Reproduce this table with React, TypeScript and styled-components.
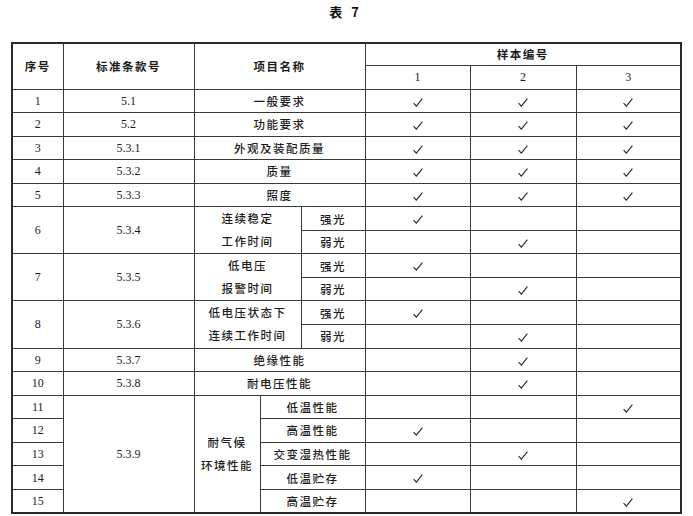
import React from "react";
import styled, { createGlobalStyle } from "styled-components";

const GlobalStyle = createGlobalStyle`
  html, body {
    margin: 0;
    padding: 0;
    background: #ffffff;
  }
  body {
    font-family: "Liberation Serif", "Noto Sans CJK SC", serif;
    color: #1c1c1c;
  }
`;

const Page = styled.div`
  width: 693px;
  height: 516px;
  overflow: hidden;
  padding: 3px 0 0 11px;
  box-sizing: border-box;
`;

const Title = styled.div`
  width: 669px;
  text-align: center;
  font-family: "Noto Sans CJK SC", sans-serif;
  font-weight: 700;
  font-size: 13px;
  line-height: 18px;
  letter-spacing: 3px;
  margin-bottom: 21px;
  color: #111;
`;

const Table = styled.table`
  width: 669px;
  table-layout: fixed;
  border-collapse: collapse;
  border: 2px solid #2a2a2a;
`;

const Cell = styled.td<{ $head?: boolean; $cjk?: boolean; $tall?: boolean }>`
  border: 1px solid #3a3a3a;
  padding: 0;
  text-align: center;
  vertical-align: middle;
  font-size: ${(p) => (p.$cjk ? "11.5px" : "12px")};
  font-family: ${(p) =>
    p.$cjk
      ? `"Noto Sans CJK SC", sans-serif`
      : `"Liberation Serif", "Noto Sans CJK SC", serif`};
  font-weight: ${(p) => (p.$head ? 600 : 500)};
  letter-spacing: ${(p) => (p.$cjk ? 1.5 : 0)}px;
  line-height: ${(p) => (p.$tall ? "23px" : "14px")};
  white-space: nowrap;
  overflow: hidden;
`;

const Row = styled.tr<{ $h: number }>`
  height: ${(p) => p.$h}px;
`;

const CheckMark = styled.svg`
  display: inline-block;
  vertical-align: middle;
  width: 10px;
  height: 9px;
`;

const Check = () => (
  <CheckMark viewBox="0 0 10 9">
    <path d="M0.6 5.2 L3.3 8.2 L9.4 0.6" fill="none" stroke="#2a2a2a" strokeWidth="1.1" />
  </CheckMark>
);

const widths = [51, 131, 66, 41, 64, 105, 106, 105];

const Marks = ({ on }: { on: number[] }) => (
  <>
    {[1, 2, 3].map((n) => (
      <Cell key={n}>{on.includes(n) ? <Check /> : null}</Cell>
    ))}
  </>
);

const simple = [
  { no: "1", clause: "5.1", name: "一般要求", on: [1, 2, 3] },
  { no: "2", clause: "5.2", name: "功能要求", on: [1, 2, 3] },
  { no: "3", clause: "5.3.1", name: "外观及装配质量", on: [1, 2, 3] },
  { no: "4", clause: "5.3.2", name: "质量", on: [1, 2, 3] },
  { no: "5", clause: "5.3.3", name: "照度", on: [1, 2, 3] },
];

const paired = [
  { no: "6", clause: "5.3.4", label: ["连续稳定", "工作时间"] },
  { no: "7", clause: "5.3.5", label: ["低电压", "报警时间"] },
  { no: "8", clause: "5.3.6", label: ["低电压状态下", "连续工作时间"] },
];

const tail = [
  { no: "9", clause: "5.3.7", name: "绝缘性能", on: [2] },
  { no: "10", clause: "5.3.8", name: "耐电压性能", on: [2] },
];

const climate = [
  { no: "11", name: "低温性能", on: [3] },
  { no: "12", name: "高温性能", on: [1] },
  { no: "13", name: "交变湿热性能", on: [2] },
  { no: "14", name: "低温贮存", on: [1] },
  { no: "15", name: "高温贮存", on: [3] },
];

const RH = 23.55;

export default function App() {
  return (
    <Page>
      <GlobalStyle />
      <Title>表 7</Title>
      <Table>
        <colgroup>
          {widths.map((w, i) => (
            <col key={i} style={{ width: w }} />
          ))}
        </colgroup>
        <tbody>
          <Row $h={22}>
            <Cell $head $cjk rowSpan={2}>序号</Cell>
            <Cell $head $cjk rowSpan={2}>标准条款号</Cell>
            <Cell $head $cjk rowSpan={2} colSpan={3}>项目名称</Cell>
            <Cell $head $cjk colSpan={3}>样本编号</Cell>
          </Row>
          <Row $h={24}>
            <Cell>1</Cell>
            <Cell>2</Cell>
            <Cell>3</Cell>
          </Row>
          {simple.map((r) => (
            <Row $h={RH} key={r.no}>
              <Cell>{r.no}</Cell>
              <Cell>{r.clause}</Cell>
              <Cell $cjk colSpan={3}>{r.name}</Cell>
              <Marks on={r.on} />
            </Row>
          ))}
          {paired.map((r) => (
            <React.Fragment key={r.no}>
              <Row $h={RH}>
                <Cell rowSpan={2}>{r.no}</Cell>
                <Cell rowSpan={2}>{r.clause}</Cell>
                <Cell $cjk $tall rowSpan={2} colSpan={2}>
                  {r.label[0]}
                  <br />
                  {r.label[1]}
                </Cell>
                <Cell $cjk>强光</Cell>
                <Marks on={[1]} />
              </Row>
              <Row $h={RH}>
                <Cell $cjk>弱光</Cell>
                <Marks on={[2]} />
              </Row>
            </React.Fragment>
          ))}
          {tail.map((r) => (
            <Row $h={RH} key={r.no}>
              <Cell>{r.no}</Cell>
              <Cell>{r.clause}</Cell>
              <Cell $cjk colSpan={3}>{r.name}</Cell>
              <Marks on={r.on} />
            </Row>
          ))}
          {climate.map((r, i) => (
            <Row $h={RH} key={r.no}>
              <Cell>{r.no}</Cell>
              {i === 0 && (
                <>
                  <Cell rowSpan={5}>5.3.9</Cell>
                  <Cell $cjk $tall rowSpan={5}>
                    耐气候
                    <br />
                    环境性能
                  </Cell>
                </>
              )}
              <Cell $cjk colSpan={2}>{r.name}</Cell>
              <Marks on={r.on} />
            </Row>
          ))}
        </tbody>
      </Table>
    </Page>
  );
}
